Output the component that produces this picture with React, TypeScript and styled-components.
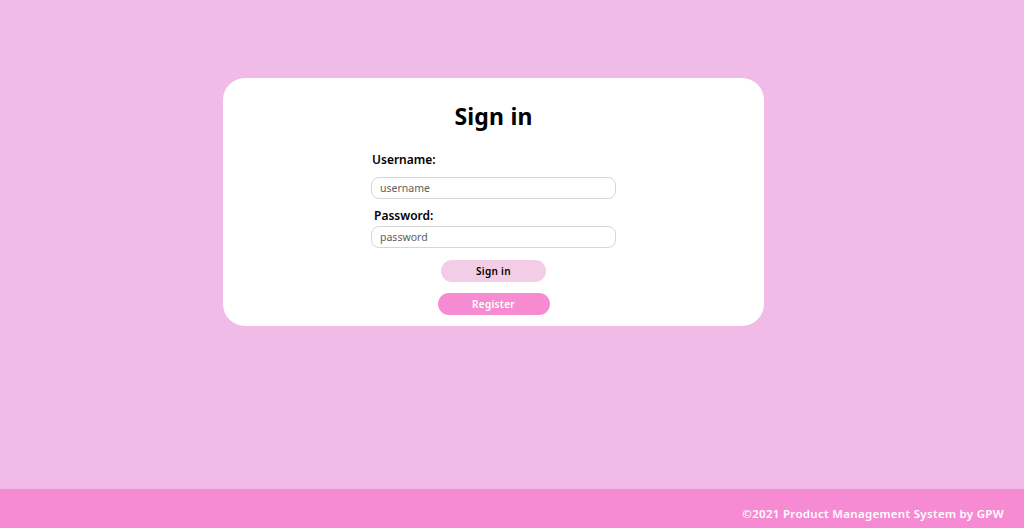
import styled, { createGlobalStyle } from "styled-components";

const GlobalStyle = createGlobalStyle`
  html, body {
    margin: 0;
    padding: 0;
    height: 100%;
  }
  body {
    font-family: "Noto Sans", "DejaVu Sans", sans-serif;
    background-color: #f0bbe6;
  }
  #root {
    height: 100%;
  }
`;

export default function App(): JSX.Element {
  return (
    <>
      <GlobalStyle />
      <Page>
        <Main>
          <Card>
            <Title>Sign in</Title>
            <Form onSubmit={(e) => e.preventDefault()}>
              <Field>
                <Label htmlFor="username">Username:</Label>
                <Input id="username" type="text" placeholder="username" $gap={8} />
              </Field>
              <Field>
                <Label htmlFor="password" $indent={3}>
                  Password:
                </Label>
                <Input id="password" type="password" placeholder="password" $gap={1} />
              </Field>
              <BtnGroup>
                <Button type="submit" $variant="light" $width={105}>
                  Sign in
                </Button>
                <Button type="button" $variant="primary" $width={112}>
                  Register
                </Button>
              </BtnGroup>
            </Form>
          </Card>
        </Main>
        <Footer>
          <FooterText>©2021 Product Management System by GPW</FooterText>
        </Footer>
      </Page>
    </>
  );
}

const Page = styled.div`
  display: flex;
  flex-direction: column;
  height: 528px;
`;

const Main = styled.main`
  flex: 1;
  display: flex;
  justify-content: center;
  align-items: flex-start;
  padding-top: 78px;
  padding-right: 37px;
`;

const Card = styled.div`
  width: 541px;
  height: 248px;
  box-sizing: border-box;
  background-color: #ffffff;
  border-radius: 22px;
  display: flex;
  flex-direction: column;
  align-items: center;
  padding-top: 21px;
`;

const Title = styled.h1`
  margin: 0;
  font-size: 23px;
  font-weight: 700;
  color: #000;
  line-height: 34px;
  letter-spacing: 0.2px;
`;

const Form = styled.form`
  width: 245px;
  display: flex;
  flex-direction: column;
  margin-top: 18px;
`;

const Field = styled.div`
  display: flex;
  flex-direction: column;
  margin-bottom: 8px;
`;

const Label = styled.label<{ $indent?: number }>`
  font-size: 12px;
  font-weight: 600;
  color: #000;
  line-height: 18px;
  padding-left: ${(p) => p.$indent ?? 1}px;
`;

const Input = styled.input<{ $gap: number }>`
  margin-top: ${(p) => p.$gap}px;
  height: 22px;
  box-sizing: border-box;
  width: 100%;
  border: 1px solid #d6d6d6;
  border-radius: 8px;
  padding: 0 8px;
  font-family: inherit;
  font-size: 10.5px;
  color: #333;
  outline: none;

  &::placeholder {
    color: #5e5e5e;
    font-family: inherit;
  }
`;

const BtnGroup = styled.div`
  display: flex;
  flex-direction: column;
  align-items: center;
  gap: 11px;
  margin-top: 4px;
`;

const Button = styled.button<{ $variant: "light" | "primary"; $width: number }>`
  width: ${(p) => p.$width}px;
  height: 22px;
  border: 0;
  border-radius: 11px;
  font-family: inherit;
  font-size: 10px;
  font-weight: 600;
  letter-spacing: 0.3px;
  cursor: pointer;
  background-color: ${(p) => (p.$variant === "primary" ? "#f78bd2" : "#f2cde5")};
  color: ${(p) => (p.$variant === "primary" ? "#ffffff" : "#000000")};

  &:hover {
    opacity: 0.9;
  }
`;

const Footer = styled.footer`
  height: 39px;
  background-color: #f78bd3;
  display: flex;
  align-items: center;
  justify-content: flex-end;
  padding-right: 20px;
`;

const FooterText = styled.span`
  color: #ffffff;
  font-size: 11.5px;
  font-weight: 600;
  letter-spacing: 0.3px;
  margin-top: 10px;
`;
